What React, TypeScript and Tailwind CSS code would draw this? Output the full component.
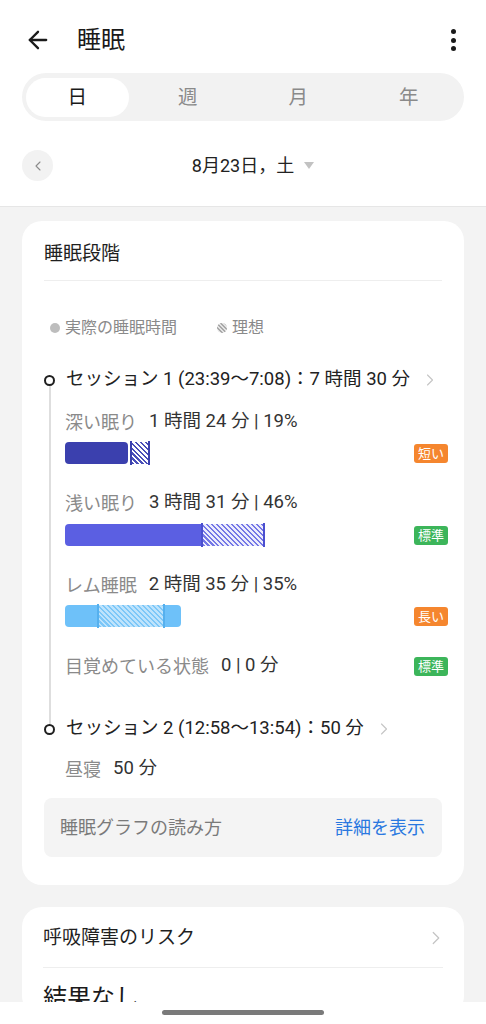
import React from "react";
import { ArrowLeft, ChevronLeft, ChevronRight } from "lucide-react";

function Badge({ label, tone }: { label: string; tone: "orange" | "green" }) {
  return (
    <span
      className={`inline-flex h-[19px] items-center rounded-[3px] px-[4px] text-[13px] leading-none text-white ${
        tone === "orange" ? "bg-[#f5862e]" : "bg-[#3cb55a]"
      }`}
    >
      {label}
    </span>
  );
}

function SessionRow({ text, first }: { text: string; first?: boolean }) {
  return (
    <div className="flex h-[26px] items-stretch">
      <div className="flex w-[11px] flex-col items-center">
        <div className={`w-[2px] flex-1 ${first ? "" : "bg-[#dedede]"}`} />
        <div className="h-[11px] w-[11px] rounded-full border-[2.5px] border-[#1f1f1f]" />
        <div className={`w-[2px] flex-1 ${first ? "bg-[#dedede]" : ""}`} />
      </div>
      <div className="flex items-center pl-[11px] text-[18.5px] text-[#222]">
        <span>{text}</span>
        <ChevronRight size={20} strokeWidth={1.3} className="ml-[10px] text-[#c4c4c4]" />
      </div>
    </div>
  );
}

function StageLabel({ label, value }: { label: string; value: string }) {
  return (
    <div className="flex h-[24px] items-center text-[18px]">
      <span className="text-[#8a8a8a]">{label}</span>
      <span className="ml-[12px] text-[18.5px] text-[#333]">{value}</span>
    </div>
  );
}

function DeepBar() {
  return (
    <div className="flex h-[24px] items-center">
      <div className="h-[22px] w-[63px] rounded-[4px] bg-[#3b40ae]" />
      <div className="ml-[2px] h-[24px] w-[2px] bg-[#3b40ae]" />
      <div className="h-[22px] w-[16px] bg-[repeating-linear-gradient(45deg,#4a4fb8_0_1.5px,#ffffff_1.5px_3.5px)]" />
      <div className="h-[24px] w-[2px] bg-[#3b40ae]" />
    </div>
  );
}

function LightBar() {
  return (
    <div className="flex h-[24px] items-center">
      <div className="h-[22px] w-[136px] rounded-l-[4px] bg-[#5b5fe2]" />
      <div className="h-[24px] w-[2px] bg-[#4b4fcf]" />
      <div className="h-[22px] w-[60px] bg-[repeating-linear-gradient(45deg,#7477e6_0_1.5px,#ececfc_1.5px_3.5px)]" />
      <div className="h-[24px] w-[2px] bg-[#4b4fcf]" />
    </div>
  );
}

function RemBar() {
  return (
    <div className="flex h-[24px] items-center">
      <div className="flex h-[22px] w-[116px] items-center rounded-[4px] bg-[#6ec1f9]">
        <div className="h-full w-[32px]" />
        <div className="h-[24px] w-[2px] bg-[#55b0ee]" />
        <div className="h-full w-[64px] bg-[repeating-linear-gradient(45deg,#7cc7f8_0_1.5px,#bde3fc_1.5px_3.5px)]" />
        <div className="h-[24px] w-[2px] bg-[#55b0ee]" />
      </div>
    </div>
  );
}

export default function App() {
  return (
    <div className="flex h-[1024px] w-[486px] flex-col overflow-hidden bg-white font-['Roboto','Noto_Sans_CJK_JP',sans-serif]">
      <div className="min-h-0 flex-1 overflow-hidden bg-[#f3f3f3]">
        <div className="bg-white">
          {/* header */}
          <div className="flex h-[73px] items-center pl-[24px] pr-[30px] pt-[7px]">
            <ArrowLeft size={28} strokeWidth={2} className="text-[#1a1a1a]" />
            <span className="ml-[25px] text-[24px] text-[#1a1a1a]">睡眠</span>
            <div className="ml-auto flex flex-col items-center gap-[3.5px]">
              <div className="h-[5px] w-[5px] rounded-full bg-[#1a1a1a]" />
              <div className="h-[5px] w-[5px] rounded-full bg-[#1a1a1a]" />
              <div className="h-[5px] w-[5px] rounded-full bg-[#1a1a1a]" />
            </div>
          </div>

          {/* tabs */}
          <div className="mx-[22px] grid h-[48px] grid-cols-4 rounded-full bg-[#f2f2f2] pt-[1px] text-[19.5px]">
            <div className="m-[4px] flex items-center justify-center rounded-full bg-white text-[#1a1a1a]">日</div>
            <div className="flex items-center justify-center text-[#8a8a8a]">週</div>
            <div className="flex items-center justify-center text-[#8a8a8a]">月</div>
            <div className="flex items-center justify-center text-[#8a8a8a]">年</div>
          </div>

          {/* date */}
          <div className="grid h-[86px] grid-cols-[31px_1fr_31px] items-center border-b border-[#e6e6e6] px-[22px] pt-[4px]">
            <div className="flex h-[31px] w-[31px] items-center justify-center rounded-full bg-[#f2f2f2]">
              <ChevronLeft size={16} strokeWidth={1.6} className="text-[#8a8a8a]" />
            </div>
            <div className="flex items-center justify-center pl-[20px] text-[18px] text-[#222]">
              <span>8月23日，土</span>
              <span className="ml-[10px] h-0 w-0 border-x-[5px] border-t-[7px] border-x-transparent border-t-[#c2c2c2]" />
            </div>
            <div />
          </div>
        </div>

        {/* sleep stages card */}
        <div className="mx-[22px] mt-[14px] rounded-[20px] bg-white px-[22px] pb-[28px] pt-[21px]">
          <div className="h-[24px] text-[19px] leading-[24px] text-[#1f1f1f]">睡眠段階</div>
          <div className="mt-[14px] border-t border-[#eeeeee]" />

          <div className="ml-[6px] mt-[37px] flex h-[20px] items-center text-[16px] text-[#8a8a8a]">
            <span className="h-[10px] w-[10px] rounded-full bg-[#bdbdbd]" />
            <span className="ml-[5px]">実際の睡眠時間</span>
            <span className="ml-[40px] h-[10px] w-[10px] rounded-full bg-[repeating-linear-gradient(45deg,#a8a8a8_0_1.5px,#e4e4e4_1.5px_3px)]" />
            <span className="ml-[5px]">理想</span>
          </div>

          <div className="mr-[-6px] mt-[29px]">
            <SessionRow first text="セッション 1 (23:39〜7:08)：7 時間 30 分" />
            <div className="flex">
              <div className="flex w-[11px] justify-center">
                <div className="w-[2px] bg-[#dedede]" />
              </div>
              <div className="flex-1 pb-[38px] pl-[10px]">
                <div className="mt-[17px]">
                  <StageLabel label="深い眠り" value="1 時間 24 分 | 19%" />
                  <div className="mt-[7px] flex items-center justify-between">
                    <DeepBar />
                    <Badge label="短い" tone="orange" />
                  </div>
                </div>
                <div className="mt-[26px]">
                  <StageLabel label="浅い眠り" value="3 時間 31 分 | 46%" />
                  <div className="mt-[8px] flex items-center justify-between">
                    <LightBar />
                    <Badge label="標準" tone="green" />
                  </div>
                </div>
                <div className="mt-[26px]">
                  <StageLabel label="レム睡眠" value="2 時間 35 分 | 35%" />
                  <div className="mt-[7px] flex items-center justify-between">
                    <RemBar />
                    <Badge label="長い" tone="orange" />
                  </div>
                </div>
                <div className="mt-[26px] flex items-center justify-between">
                  <StageLabel label="目覚めている状態" value="0 | 0 分" />
                  <Badge label="標準" tone="green" />
                </div>
              </div>
            </div>
            <SessionRow text="セッション 2 (12:58〜13:54)：50 分" />
          </div>

          <div className="mt-[15px] pl-[21px]">
            <StageLabel label="昼寝" value="50 分" />
          </div>

          <div className="mt-[17px] flex h-[59px] items-center justify-between rounded-[8px] bg-[#f4f4f4] pl-[16px] pr-[17px] text-[18px]">
            <span className="text-[#7a7a7a]">睡眠グラフの読み方</span>
            <span className="text-[#2a78e0]">詳細を表示</span>
          </div>
        </div>

        {/* breathing card */}
        <div className="mx-[22px] mt-[22px] rounded-[20px] bg-white px-[21px] pt-[18px]">
          <div className="flex h-[26px] items-center justify-between text-[19px] text-[#1f1f1f]">
            <span>呼吸障害のリスク</span>
            <ChevronRight size={22} strokeWidth={1.3} className="mr-[-4px] text-[#c4c4c4]" />
          </div>
          <div className="mt-[16px] border-t border-[#eeeeee]" />
          <div className="mt-[12px] text-[24px] text-[#1a1a1a]">結果なし</div>
        </div>
      </div>

      {/* nav bar */}
      <div className="flex h-[22px] shrink-0 items-start justify-center bg-white pt-[8px]">
        <div className="h-[5px] w-[162px] rounded-full bg-[#7a7a7a]" />
      </div>
    </div>
  );
}
